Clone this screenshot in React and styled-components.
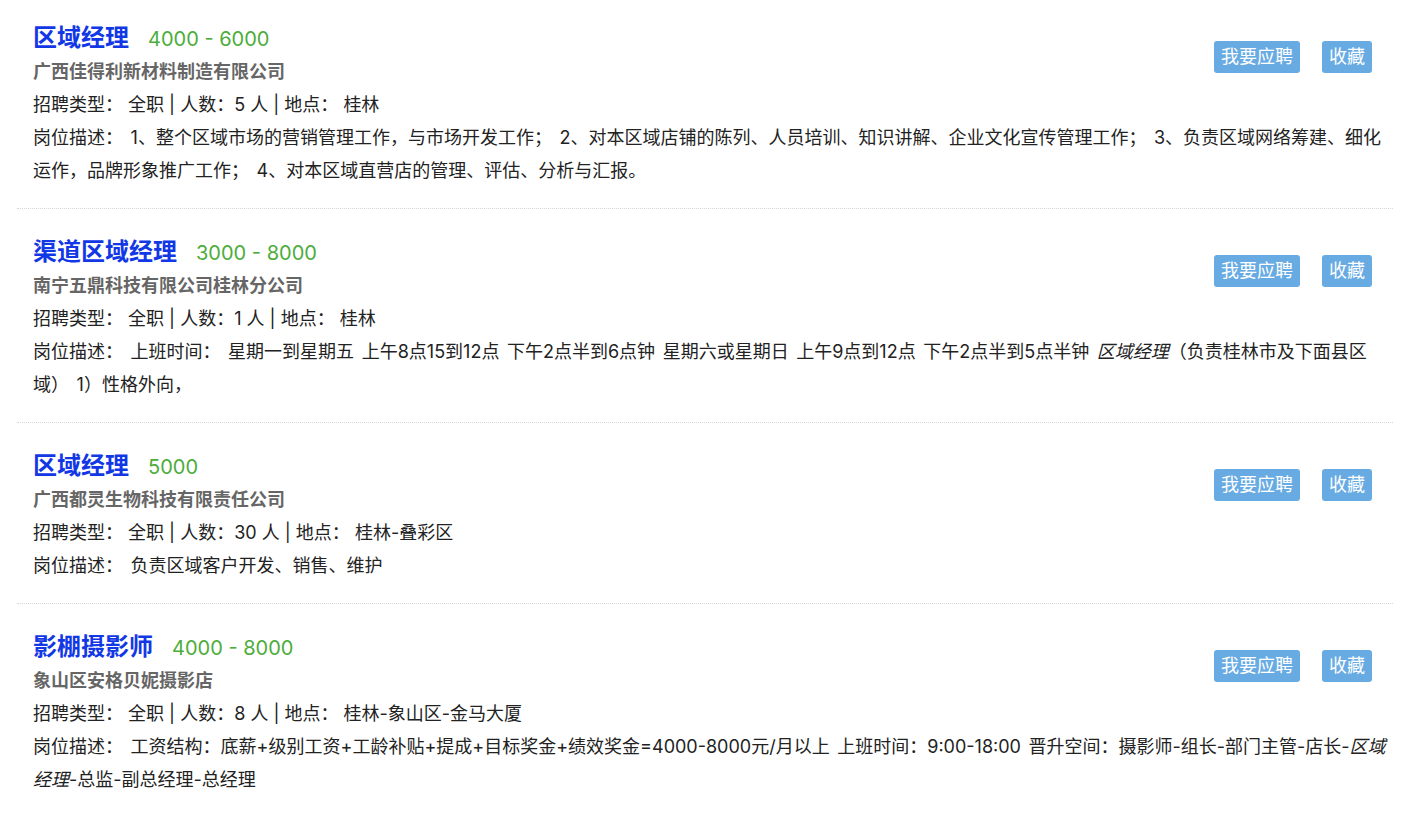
import React from 'react';
import styled, { createGlobalStyle } from 'styled-components';

const GlobalStyle = createGlobalStyle`
    body {
        margin: 0;
        background: #fff;
        font-family: Inter, "Noto Sans CJK SC", sans-serif;
        color: #333;
    }
`;

const List = styled.div`
    padding: 0 17px;
`;

const Item = styled.div`
    padding: 24px 7px 21px 16px;
    border-top: 1px dotted #d6d6d6;
    &:first-child {
        padding-top: 19px;
        border-top: none;
    }
`;

const Top = styled.div`
    display: flex;
    justify-content: space-between;
    align-items: flex-start;
`;

const Head = styled.div`
    display: flex;
    flex-direction: column;
`;

const TitleRow = styled.div`
    display: flex;
    align-items: baseline;
    gap: 19px;
    height: 37px;
    line-height: 37px;
`;

const Title = styled.a`
    font-size: 24px;
    font-weight: bold;
    color: #1238e6;
    text-decoration: none;
`;

const Salary = styled.span`
    font-size: 20px;
    color: #4cad3a;
`;

const Company = styled.div`
    font-size: 18px;
    font-weight: bold;
    color: #666;
    line-height: 32px;
`;

const Line = styled.div`
    font-size: 18px;
    line-height: 33px;
    color: #222;
`;

const Desc = styled(Line)`
    word-spacing: 2.5px;
    em {
        font-style: italic;
    }
`;

const Actions = styled.div`
    display: flex;
    gap: 22px;
    margin: 22px 14px 0 0;
`;

const Button = styled.button`
    height: 32px;
    padding: 0 7px;
    border: none;
    border-radius: 3px;
    background: #68abe3;
    color: #fff;
    font-family: inherit;
    font-size: 18px;
    line-height: 32px;
    cursor: pointer;
`;

const jobs = [
    {
        title: '区域经理',
        salary: '4000 - 6000',
        company: '广西佳得利新材料制造有限公司',
        count: 5,
        place: '桂林',
        desc: <>1、整个区域市场的营销管理工作，与市场开发工作； 2、对本区域店铺的陈列、人员培训、知识讲解、企业文化宣传管理工作； 3、负责区域网络筹建、细化运作，品牌形象推广工作； 4、对本区域直营店的管理、评估、分析与汇报。</>,
    },
    {
        title: '渠道区域经理',
        salary: '3000 - 8000',
        company: '南宁五鼎科技有限公司桂林分公司',
        count: 1,
        place: '桂林',
        desc: <>上班时间： 星期一到星期五 上午8点15到12点 下午2点半到6点钟 星期六或星期日 上午9点到12点 下午2点半到5点半钟 <em>区域经理</em>（负责桂林市及下面县区域） 1）性格外向，</>,
    },
    {
        title: '区域经理',
        salary: '5000',
        company: '广西都灵生物科技有限责任公司',
        count: 30,
        place: '桂林-叠彩区',
        desc: <>负责区域客户开发、销售、维护</>,
    },
    {
        title: '影棚摄影师',
        salary: '4000 - 8000',
        company: '象山区安格贝妮摄影店',
        count: 8,
        place: '桂林-象山区-金马大厦',
        desc: <>工资结构：底薪+级别工资+工龄补贴+提成+目标奖金+绩效奖金=4000-8000元/月以上 上班时间：9:00-18:00 晋升空间：摄影师-组长-部门主管-店长-<em>区域经理</em>-总监-副总经理-总经理</>,
    },
];

const App = () => {
    return (
        <>
            <GlobalStyle />
            <List>
                {jobs.map((job, i) => (
                    <Item key={i}>
                        <Top>
                            <Head>
                                <TitleRow>
                                    <Title href="#">{job.title}</Title>
                                    <Salary>{job.salary}</Salary>
                                </TitleRow>
                                <Company>{job.company}</Company>
                                <Line>招聘类型： 全职 | 人数：{job.count} 人 | 地点： {job.place}</Line>
                            </Head>
                            <Actions>
                                <Button>我要应聘</Button>
                                <Button>收藏</Button>
                            </Actions>
                        </Top>
                        <Desc>岗位描述： {job.desc}</Desc>
                    </Item>
                ))}
            </List>
        </>
    );
};

export default App;
